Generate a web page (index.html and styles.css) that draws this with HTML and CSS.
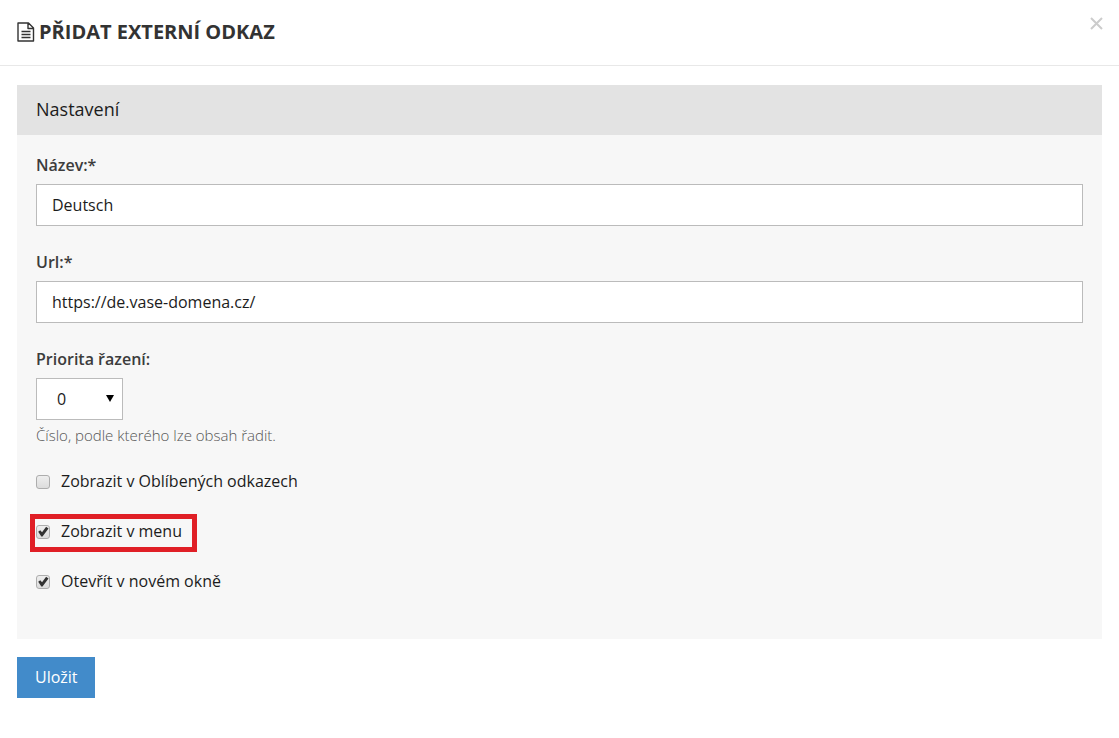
FILE: index.html
```html
<!DOCTYPE html>
<html lang="cs">
<head>
    <meta charset="UTF-8">
    <meta name="viewport" content="width=device-width, initial-scale=1.0">
    <title>Přidat externí odkaz</title>
    <link rel="stylesheet" href="styles.css">
</head>
<body>
    <header class="modal-header">
        <h1 class="modal-title">
            <svg class="icon" width="18" height="20" viewBox="0 0 18 20" fill="none" stroke="#333" aria-hidden="true">
                <path stroke-width="1.4" stroke-linejoin="round" d="M1 1h10.500l5 5v13h-15.500zM11 1v5.500h5.500"/>
                <path stroke-width="1.3" d="M4.500 9.500h9M4.500 12.500h9M4.500 15.500h9"/>
            </svg>
            PŘIDAT EXTERNÍ ODKAZ
        </h1>
        <button type="button" class="close" aria-label="Zavřít">
            <svg width="13" height="13" viewBox="0 0 13 13" fill="none" stroke="#ccc" stroke-width="2" aria-hidden="true">
                <path d="M1 1l11 11M12 1L1 12"/>
            </svg>
        </button>
    </header>
    <form class="modal-body">
        <section class="panel">
            <h2 class="panel-heading">Nastavení</h2>
            <div class="panel-body">
                <div class="form-group">
                    <label for="name">Název:*</label>
                    <input type="text" id="name" class="form-control" value="Deutsch">
                </div>
                <div class="form-group">
                    <label for="url">Url:*</label>
                    <input type="text" id="url" class="form-control" value="https://de.vase-domena.cz/">
                </div>
                <div class="form-group">
                    <label for="priority">Priorita řazení:</label>
                    <div class="select">
                        <select id="priority" class="form-control">
                            <option>0</option>
                            <option>1</option>
                            <option>2</option>
                        </select>
                    </div>
                    <p class="help">Číslo, podle kterého lze obsah řadit.</p>
                </div>
                <div class="checks">
                    <label class="check"><input type="checkbox"> Zobrazit v Oblíbených odkazech</label>
                    <label class="check marked"><input type="checkbox" checked> Zobrazit v menu</label>
                    <label class="check"><input type="checkbox" checked> Otevřít v novém okně</label>
                </div>
            </div>
        </section>
        <button type="submit" class="btn">Uložit</button>
    </form>
</body>
</html>
```

FILE: styles.css
```css
* {
    box-sizing: border-box;
}
body {
    margin: 0;
    background-color: #fff;
    color: #1c1c1c;
    font-family: "Open Sans", "Noto Sans", sans-serif;
    font-size: 16px;
    line-height: 24px;
}
.modal-header {
    display: flex;
    justify-content: space-between;
    align-items: flex-start;
    padding: 17px 16px 18px 17px;
    border-bottom: 1px solid #e8e8e8;
}
.modal-title {
    display: flex;
    align-items: center;
    gap: 4px;
    margin: 0;
    color: #333;
    font-size: 20px;
    font-weight: 700;
    line-height: 30px;
}
.close {
    display: flex;
    padding: 0;
    border: none;
    background: none;
    cursor: pointer;
}
.modal-body {
    padding: 19px 17px;
}
.panel {
    margin-bottom: 18px;
    background-color: #f7f7f7;
}
.panel-heading {
    margin: 0;
    padding: 12px 19px 14px;
    background-color: #e3e3e3;
    font-size: 18px;
    font-weight: 400;
}
.panel-body {
    padding: 19px 19px 46px;
}
.form-group {
    margin-bottom: 25px;
}
.form-group label {
    display: block;
    margin-bottom: 7px;
    color: #3c3c3c;
    font-weight: 600;
    line-height: 23px;
}
.form-control {
    display: block;
    width: 100%;
    height: 42px;
    padding: 0 15px;
    border: 1px solid #bbb;
    border-radius: 0;
    background-color: #fff;
    color: #1c1c1c;
    font: inherit;
}
.select {
    position: relative;
    width: 87px;
}
.select .form-control {
    appearance: none;
    padding-left: 20px;
}
.select::after {
    content: "";
    position: absolute;
    top: 17px;
    right: 9px;
    border-top: 7px solid #000;
    border-left: 4px solid transparent;
    border-right: 4px solid transparent;
    pointer-events: none;
}
.help {
    margin: 3px 0 0;
    color: #555;
    font-size: 15px;
    font-weight: 300;
}
.checks {
    display: flex;
    flex-direction: column;
    align-items: flex-start;
    gap: 26px;
    margin-top: -3px;
}
.check {
    position: relative;
    display: flex;
    align-items: center;
    gap: 11px;
}
.check input {
    appearance: none;
    width: 14px;
    height: 14px;
    margin: 1px 0 0;
    border: 1px solid #adadad;
    border-radius: 3px;
    background: linear-gradient(#eee, #dcdcdc);
}
.check input:checked::before {
    content: "";
    display: block;
    height: 12px;
    background-color: #333;
    clip-path: polygon(10% 52%, 27% 40%, 42% 57%, 76% 10%, 96% 24%, 46% 92%, 36% 92%);
}
/* red frame around the important option */
.marked::after {
    content: "";
    position: absolute;
    inset: -5px -15px -9px -6px;
    border: 5px solid #e01f26;
    pointer-events: none;
}
.btn {
    padding: 8px 17px 9px 18px;
    border: none;
    background-color: #428bca;
    color: #fff;
    font: inherit;
    cursor: pointer;
}
```
